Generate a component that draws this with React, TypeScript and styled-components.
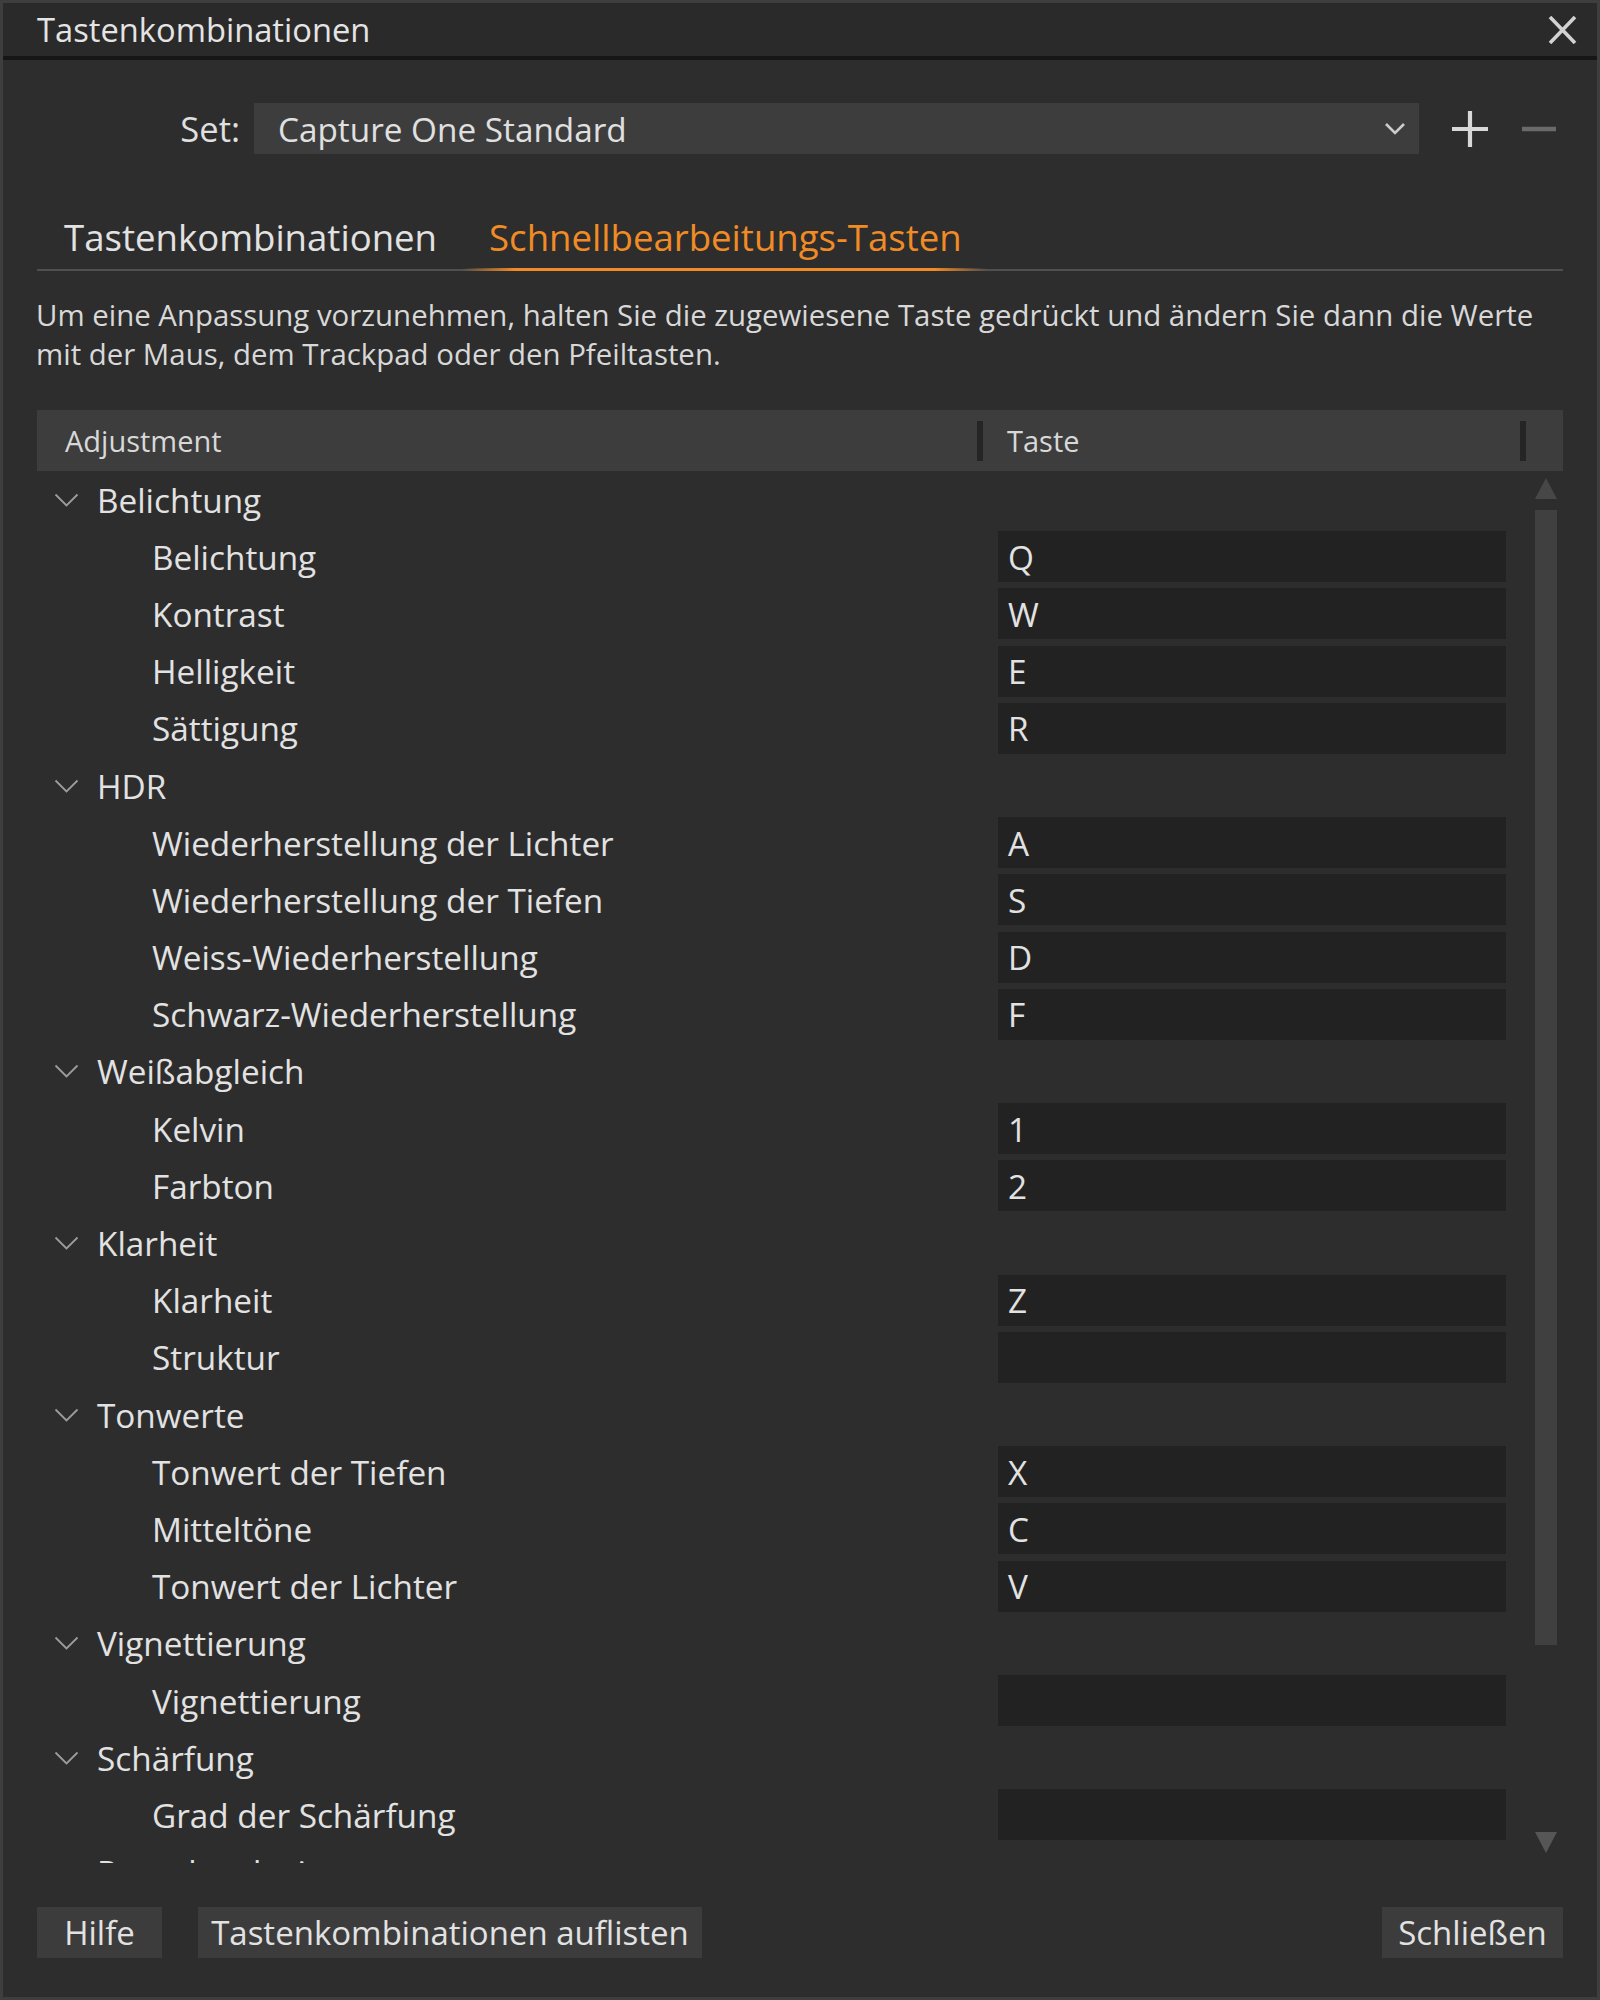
import styled, { createGlobalStyle } from "styled-components";

const GlobalStyle = createGlobalStyle`
  html, body {
    margin: 0;
    padding: 0;
    background: #2d2d2d;
  }
  body {
    font-family: "Open Sans", "Noto Sans", "Liberation Sans", sans-serif;
    color: #e0e0e0;
  }
`;

const Window = styled.div`
  box-sizing: border-box;
  width: 1600px;
  height: 2000px;
  border: 3px solid #3e3e3e;
  background: #2d2d2d;
  display: flex;
  flex-direction: column;
  overflow: hidden;
`;

const TitleBar = styled.div`
  height: 53px;
  background: #2a2a2a;
  border-bottom: 4px solid #161616;
  display: flex;
  align-items: center;
  justify-content: space-between;
  padding: 0 20px 0 34px;
  font-size: 32.7px;
  color: #e4e4e4;
`;

const Content = styled.div`
  flex: 1;
  display: flex;
  flex-direction: column;
  padding: 0 34px;
`;

const SetRow = styled.div`
  margin-top: 43px;
  height: 51px;
  display: flex;
  align-items: center;
`;

const SetLabel = styled.div`
  box-sizing: border-box;
  width: 217px;
  padding-right: 14px;
  text-align: right;
  font-size: 34.5px;
`;

const Select = styled.div`
  flex: 1;
  height: 51px;
  background: #3d3d3d;
  display: flex;
  align-items: center;
  justify-content: space-between;
  padding: 0 13px 0 24px;
  font-size: 33.3px;
`;

const IconButton = styled.div<{ $gap: number; $end?: number }>`
  margin-left: ${(p) => p.$gap}px;
  margin-right: ${(p) => p.$end ?? 0}px;
  display: flex;
  align-items: center;
`;

const TabBar = styled.div`
  margin-top: 51px;
  display: flex;
  border-bottom: 2px solid #505050;
`;

const Tab = styled.div<{ $active?: boolean }>`
  position: relative;
  padding: 0 25px 0 27px;
  height: 64px;
  line-height: 64px;
  font-size: 36.6px;
  color: ${(p) => (p.$active ? "#f08b25" : "#e2e2e2")};

  &::after {
    content: "";
    display: ${(p) => (p.$active ? "block" : "none")};
    position: absolute;
    left: 0;
    right: 0;
    bottom: -2px;
    height: 3px;
    background: linear-gradient(
      90deg,
      rgba(240, 139, 37, 0),
      #f08b25 10%,
      #f08b25 90%,
      rgba(240, 139, 37, 0)
    );
  }
`;

const Description = styled.p`
  margin: 25px 0 36px -1px;
  font-size: 29.4px;
  line-height: 39px;
  color: #d8d8d8;
  white-space: nowrap;
`;

const Header = styled.div`
  height: 61px;
  background: #3d3d3d;
  display: flex;
  align-items: center;
  font-size: 29px;
  color: #d8d8d8;
`;

const HeaderCell = styled.div<{ $width?: number }>`
  box-sizing: border-box;
  width: ${(p) => (p.$width ? `${p.$width}px` : "auto")};
  flex: ${(p) => (p.$width ? "none" : "1")};
  padding-left: ${(p) => (p.$width ? 28 : 24)}px;
`;

const HeaderSep = styled.div`
  width: 6px;
  height: 40px;
  background: #252525;
`;

const HeaderTail = styled.div`
  width: 37px;
`;

const ListBody = styled.div`
  height: 1392px;
  display: flex;
  overflow: hidden;
`;

const List = styled.div`
  flex: 1;
`;

const Row = styled.div`
  height: 57.2px;
  display: grid;
  grid-template-columns: 961px 508px;
  align-items: center;
  font-size: 33.3px;
  color: #e2e2e2;
`;

const GroupName = styled.div`
  display: flex;
  align-items: center;
  padding-left: 17px;
  gap: 18px;
  white-space: nowrap;
`;

const ItemName = styled.div`
  padding-left: 115px;
  white-space: nowrap;
`;

const KeyCell = styled.div`
  box-sizing: border-box;
  height: 51px;
  background: #222222;
  padding-left: 10px;
  display: flex;
  align-items: center;
`;

const Scrollbar = styled.div`
  width: 40px;
  box-sizing: border-box;
  padding: 7px 6px 10px 12px;
  display: flex;
  flex-direction: column;
`;

const Thumb = styled.div`
  margin-top: 11px;
  width: 22px;
  height: 1135px;
  background: #404040;
`;

const Spacer = styled.div`
  flex: 1;
`;

const Footer = styled.div`
  margin-top: 44px;
  display: flex;
  gap: 36px;
`;

const Button = styled.div<{ $width: number; $push?: boolean }>`
  width: ${(p) => p.$width}px;
  height: 51px;
  background: #3c3c3c;
  display: flex;
  align-items: center;
  justify-content: center;
  font-size: 33px;
  color: #e2e2e2;
  margin-left: ${(p) => (p.$push ? "auto" : "0")};
`;

type Item = [string, string];
type Group = { name: string; items: Item[] };

const groups: Group[] = [
  {
    name: "Belichtung",
    items: [
      ["Belichtung", "Q"],
      ["Kontrast", "W"],
      ["Helligkeit", "E"],
      ["Sättigung", "R"],
    ],
  },
  {
    name: "HDR",
    items: [
      ["Wiederherstellung der Lichter", "A"],
      ["Wiederherstellung der Tiefen", "S"],
      ["Weiss-Wiederherstellung", "D"],
      ["Schwarz-Wiederherstellung", "F"],
    ],
  },
  {
    name: "Weißabgleich",
    items: [
      ["Kelvin", "1"],
      ["Farbton", "2"],
    ],
  },
  {
    name: "Klarheit",
    items: [
      ["Klarheit", "Z"],
      ["Struktur", ""],
    ],
  },
  {
    name: "Tonwerte",
    items: [
      ["Tonwert der Tiefen", "X"],
      ["Mitteltöne", "C"],
      ["Tonwert der Lichter", "V"],
    ],
  },
  { name: "Vignettierung", items: [["Vignettierung", ""]] },
  { name: "Schärfung", items: [["Grad der Schärfung", ""]] },
  { name: "Rauschreduzierung", items: [] },
];

const TreeChevron = () => (
  <svg width="25" height="14" viewBox="0 0 25 14">
    <polyline
      points="1.5,1.5 12.5,12.5 23.5,1.5"
      fill="none"
      stroke="#9c9c9c"
      strokeWidth="1.8"
    />
  </svg>
);

const CloseIcon = () => (
  <svg width="29" height="28" viewBox="0 0 29 28">
    <path d="M2 1 L27 27 M27 1 L2 27" stroke="#d2d2d2" strokeWidth="3.6" />
  </svg>
);

const SelectChevron = () => (
  <svg width="22" height="14" viewBox="0 0 22 14">
    <polyline
      points="2,2 11,11 20,2"
      fill="none"
      stroke="#cccccc"
      strokeWidth="2.6"
    />
  </svg>
);

const PlusIcon = () => (
  <svg width="36" height="36" viewBox="0 0 36 36">
    <path d="M18 0 V36 M0 18 H36" stroke="#d8d8d8" strokeWidth="4.2" />
  </svg>
);

const MinusIcon = () => (
  <svg width="34" height="36" viewBox="0 0 34 36">
    <path d="M0 18 H34" stroke="#6a6a6a" strokeWidth="4.5" />
  </svg>
);

const Arrow = ({ up, color }: { up?: boolean; color: string }) => (
  <svg width="22" height="21" viewBox="0 0 22 21">
    <polygon points={up ? "11,0 22,21 0,21" : "0,0 22,0 11,21"} fill={color} />
  </svg>
);

function App() {
  return (
    <>
      <GlobalStyle />
      <Window>
        <TitleBar>
          <span>Tastenkombinationen</span>
          <CloseIcon />
        </TitleBar>
        <Content>
          <SetRow>
            <SetLabel>Set:</SetLabel>
            <Select>
              <span>Capture One Standard</span>
              <SelectChevron />
            </Select>
            <IconButton $gap={33}>
              <PlusIcon />
            </IconButton>
            <IconButton $gap={34} $end={7}>
              <MinusIcon />
            </IconButton>
          </SetRow>

          <TabBar>
            <Tab>Tastenkombinationen</Tab>
            <Tab $active>Schnellbearbeitungs-Tasten</Tab>
          </TabBar>

          <Description>
            Um eine Anpassung vorzunehmen, halten Sie die zugewiesene Taste
            gedrückt und ändern Sie dann die Werte
            <br />
            mit der Maus, dem Trackpad oder den Pfeiltasten.
          </Description>

          <Header>
            <HeaderCell $width={940}>Adjustment</HeaderCell>
            <HeaderSep />
            <HeaderCell>Taste</HeaderCell>
            <HeaderSep />
            <HeaderTail />
          </Header>

          <ListBody>
            <List>
              {groups.map((g) => (
                <div key={g.name}>
                  <Row>
                    <GroupName>
                      <TreeChevron />
                      {g.name}
                    </GroupName>
                  </Row>
                  {g.items.map(([name, key]) => (
                    <Row key={name}>
                      <ItemName>{name}</ItemName>
                      <KeyCell>{key}</KeyCell>
                    </Row>
                  ))}
                </div>
              ))}
            </List>
            <Scrollbar>
              <Arrow up color="#474747" />
              <Thumb />
              <Spacer />
              <Arrow color="#565656" />
            </Scrollbar>
          </ListBody>

          <Footer>
            <Button $width={125}>Hilfe</Button>
            <Button $width={504}>Tastenkombinationen auflisten</Button>
            <Button $width={181} $push>
              Schließen
            </Button>
          </Footer>
        </Content>
      </Window>
    </>
  );
}

export default App;
